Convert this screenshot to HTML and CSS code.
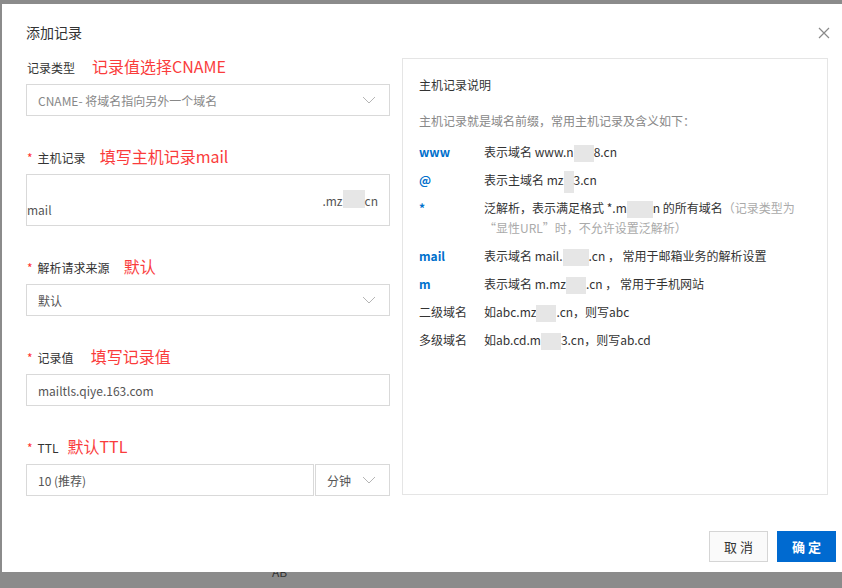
FILE: index.html
```html
<!DOCTYPE html>
<html lang="zh-CN">
<head>
    <meta charset="UTF-8">
    <title>添加记录</title>
    <link rel="stylesheet" href="styles.css">
</head>
<body>

<!-- page under the modal -->
<div class="page">
    <span class="page-text">AB</span>
</div>

<section class="dialog">
    <div class="dialog-header">
        <span class="dialog-title">添加记录</span>
        <svg class="close-btn" width="12" height="12" viewBox="0 0 12 12">
            <path d="M1 1 L11 11 M11 1 L1 11" stroke="#8a8a8a" stroke-width="1.2" fill="none"/>
        </svg>
    </div>

    <div class="dialog-body">
        <!-- Form -->
        <div class="form">
            <div class="form-item">
                <div class="label-row">
                    <span class="label">记录类型</span>
                    <span class="note">记录值选择CNAME</span>
                </div>
                <div class="control select">
                    <span class="value muted">CNAME- 将域名指向另外一个域名</span>
                    <svg class="chevron" width="14" height="8" viewBox="0 0 14 8"><polyline points="1,1 7,7 13,1" fill="none" stroke="#b5b5b5" stroke-width="1"/></svg>
                </div>
            </div>

            <div class="form-item">
                <div class="label-row">
                    <span class="label"><i class="req">*</i>主机记录</span>
                    <span class="note note-sm">填写主机记录mail</span>
                </div>
                <div class="control host">
                    <span class="host-value">mail</span>
                    <span class="host-suffix">.mz<i class="blur"></i>cn</span>
                </div>
            </div>

            <div class="form-item">
                <div class="label-row">
                    <span class="label"><i class="req">*</i>解析请求来源</span>
                    <span class="note note-sm">默认</span>
                </div>
                <div class="control select">
                    <span class="value">默认</span>
                    <svg class="chevron" width="14" height="8" viewBox="0 0 14 8"><polyline points="1,1 7,7 13,1" fill="none" stroke="#b5b5b5" stroke-width="1"/></svg>
                </div>
            </div>

            <div class="form-item">
                <div class="label-row">
                    <span class="label"><i class="req">*</i>记录值</span>
                    <span class="note">填写记录值</span>
                </div>
                <div class="control">
                    <span class="value">mailtls.qiye.163.com</span>
                </div>
            </div>

            <div class="form-item">
                <div class="label-row">
                    <span class="label"><i class="req">*</i>TTL</span>
                    <span class="note note-xs">默认TTL</span>
                </div>
                <div class="ttl-group">
                    <div class="control ttl-input">
                        <span class="value">10 (推荐)</span>
                    </div>
                    <div class="control select ttl-unit">
                        <span class="value">分钟</span>
                        <svg class="chevron" width="14" height="8" viewBox="0 0 14 8"><polyline points="1,1 7,7 13,1" fill="none" stroke="#b5b5b5" stroke-width="1"/></svg>
                    </div>
                </div>
            </div>
        </div>

        <!-- Help panel -->
        <div class="help">
            <div class="help-title">主机记录说明</div>
            <div class="help-desc">主机记录就是域名前缀，常用主机记录及含义如下：</div>

            <div class="help-row">
                <span class="key blue">www</span>
                <span class="desc">表示域名 www.n<i class="blur"></i>8.cn</span>
            </div>
            <div class="help-row">
                <span class="key blue">@</span>
                <span class="desc">表示主域名 mz<i class="blur small"></i>3.cn</span>
            </div>
            <div class="help-row">
                <span class="key blue">*</span>
                <span class="desc">泛解析，表示满足格式 *.m<i class="blur wide"></i>n 的所有域名<span class="tip">（记录类型为<br>“显性URL”时，不允许设置泛解析）</span></span>
            </div>
            <div class="help-row">
                <span class="key blue">mail</span>
                <span class="desc">表示域名 mail.<i class="blur wide"></i>.cn ， 常用于邮箱业务的解析设置</span>
            </div>
            <div class="help-row">
                <span class="key blue">m</span>
                <span class="desc">表示域名 m.mz<i class="blur"></i>.cn ， 常用于手机网站</span>
            </div>
            <div class="help-row">
                <span class="key">二级域名</span>
                <span class="desc">如abc.mz<i class="blur"></i>.cn，则写abc</span>
            </div>
            <div class="help-row">
                <span class="key">多级域名</span>
                <span class="desc">如ab.cd.m<i class="blur"></i>3.cn，则写ab.cd</span>
            </div>
        </div>
    </div>

    <div class="dialog-footer">
        <button class="btn btn-cancel">取消</button>
        <button class="btn btn-primary">确定</button>
    </div>
</section>

</body>
</html>
```

FILE: styles.css
```css
/* General */
body {
    margin: 0;
    height: 588px;
    overflow: hidden;
    background: #8b8b8b;
    font-family: "Noto Sans CJK SC", "Microsoft YaHei", sans-serif;
    font-size: 12px;
    color: #333;
}

.page {
    padding: 563px 0 0 272px;
}

.page-text {
    color: #333;
    font-size: 12px;
}

/* Modal (wider than the window, its right edge is cut off) */
.dialog {
    position: absolute;
    left: 2px;
    top: 4px;
    width: 860px;
    height: 568px;
    background: #fff;
    box-sizing: border-box;
}

.dialog-header {
    display: flex;
    justify-content: space-between;
    align-items: center;
    height: 50px;
    padding: 18px 32px 12px 24px;
    box-sizing: border-box;
}

.dialog-title {
    font-size: 14px;
    line-height: 20px;
    color: #333;
}

.close-btn {
    margin-top: 2px;
}

.dialog-body {
    display: flex;
    align-items: flex-start;
    gap: 12px;
    padding: 0 24px;
}

/* Form */
.form {
    width: 364px;
    flex-shrink: 0;
}

.form-item {
    margin-bottom: 28px;
}

.form-item:last-child {
    margin-bottom: 0;
}

.label-row {
    display: flex;
    align-items: baseline;
    height: 24px;
    line-height: 24px;
    margin-bottom: 6px;
}

.label {
    font-size: 12px;
    color: #333;
    margin-left: 1px;
}

.req {
    font-style: normal;
    color: #f33;
    margin-right: 5px;
}

.note {
    font-size: 16px;
    color: #fa3c3c;
    margin-left: 17px;
}

.note-sm {
    margin-left: 14px;
}

.note-xs {
    margin-left: 9px;
}

.control {
    display: flex;
    align-items: center;
    height: 32px;
    border: 1px solid #d9d9d9;
    box-sizing: border-box;
    padding: 0 11px;
}

.value {
    color: #555;
}

.value.muted {
    color: #888;
}

.select {
    justify-content: space-between;
}

.chevron {
    margin-right: 2px;
}

/* host record input */
.control.host {
    height: 52px;
    padding: 0 11px 0 0;
}

.host-value {
    align-self: flex-end;
    line-height: 20px;
    margin-bottom: 5px;
    color: #555;
}

.host-suffix {
    margin-left: auto;
    color: #555;
    display: flex;
    align-items: center;
}

.blur {
    display: inline-block;
    width: 20px;
    height: 17px;
    margin: -4px 0;
    background: #e6e6e6;
    vertical-align: middle;
}

.host-suffix .blur {
    width: 22px;
    height: 18px;
    margin: -2px 0 0 0;
}

.blur.small {
    width: 10px;
    height: 22px;
    margin: -6px 0;
}

.blur.wide {
    width: 26px;
}

/* TTL */
.ttl-group {
    display: flex;
    gap: 1px;
}

.ttl-input {
    width: 288px;
}

.ttl-unit {
    width: 75px;
}

/* Help panel */
.help {
    width: 426px;
    height: 437px;
    flex-shrink: 0;
    margin-top: 4px;
    border: 1px solid #e5e5e5;
    box-sizing: border-box;
    padding: 16px 16px 0 16px;
}

.help-title {
    line-height: 20px;
    margin-bottom: 16px;
    color: #333;
}

.help-desc {
    line-height: 20px;
    color: #888;
    margin-bottom: 11px;
}

.help-row {
    display: flex;
    line-height: 20px;
    margin-bottom: 8px;
}

.key {
    width: 65px;
    flex-shrink: 0;
    color: #333;
}

.key.blue {
    color: #0070cc;
    font-weight: bold;
}

.desc {
    color: #333;
}

.tip {
    color: #aaa;
}

/* Footer */
.dialog-footer {
    display: flex;
    justify-content: flex-end;
    gap: 9px;
    margin-top: 35px;
    padding-right: 26px;
}

.btn {
    width: 59px;
    height: 31px;
    font-family: inherit;
    font-size: 13px;
    letter-spacing: 3px;
    text-indent: 3px;
    cursor: pointer;
}

.btn-cancel {
    border: 1px solid #d5d5d5;
    background: #fafafa;
    color: #333;
}

.btn-primary {
    border: none;
    background: #006ad0;
    color: #fff;
    font-weight: bold;
}
```
